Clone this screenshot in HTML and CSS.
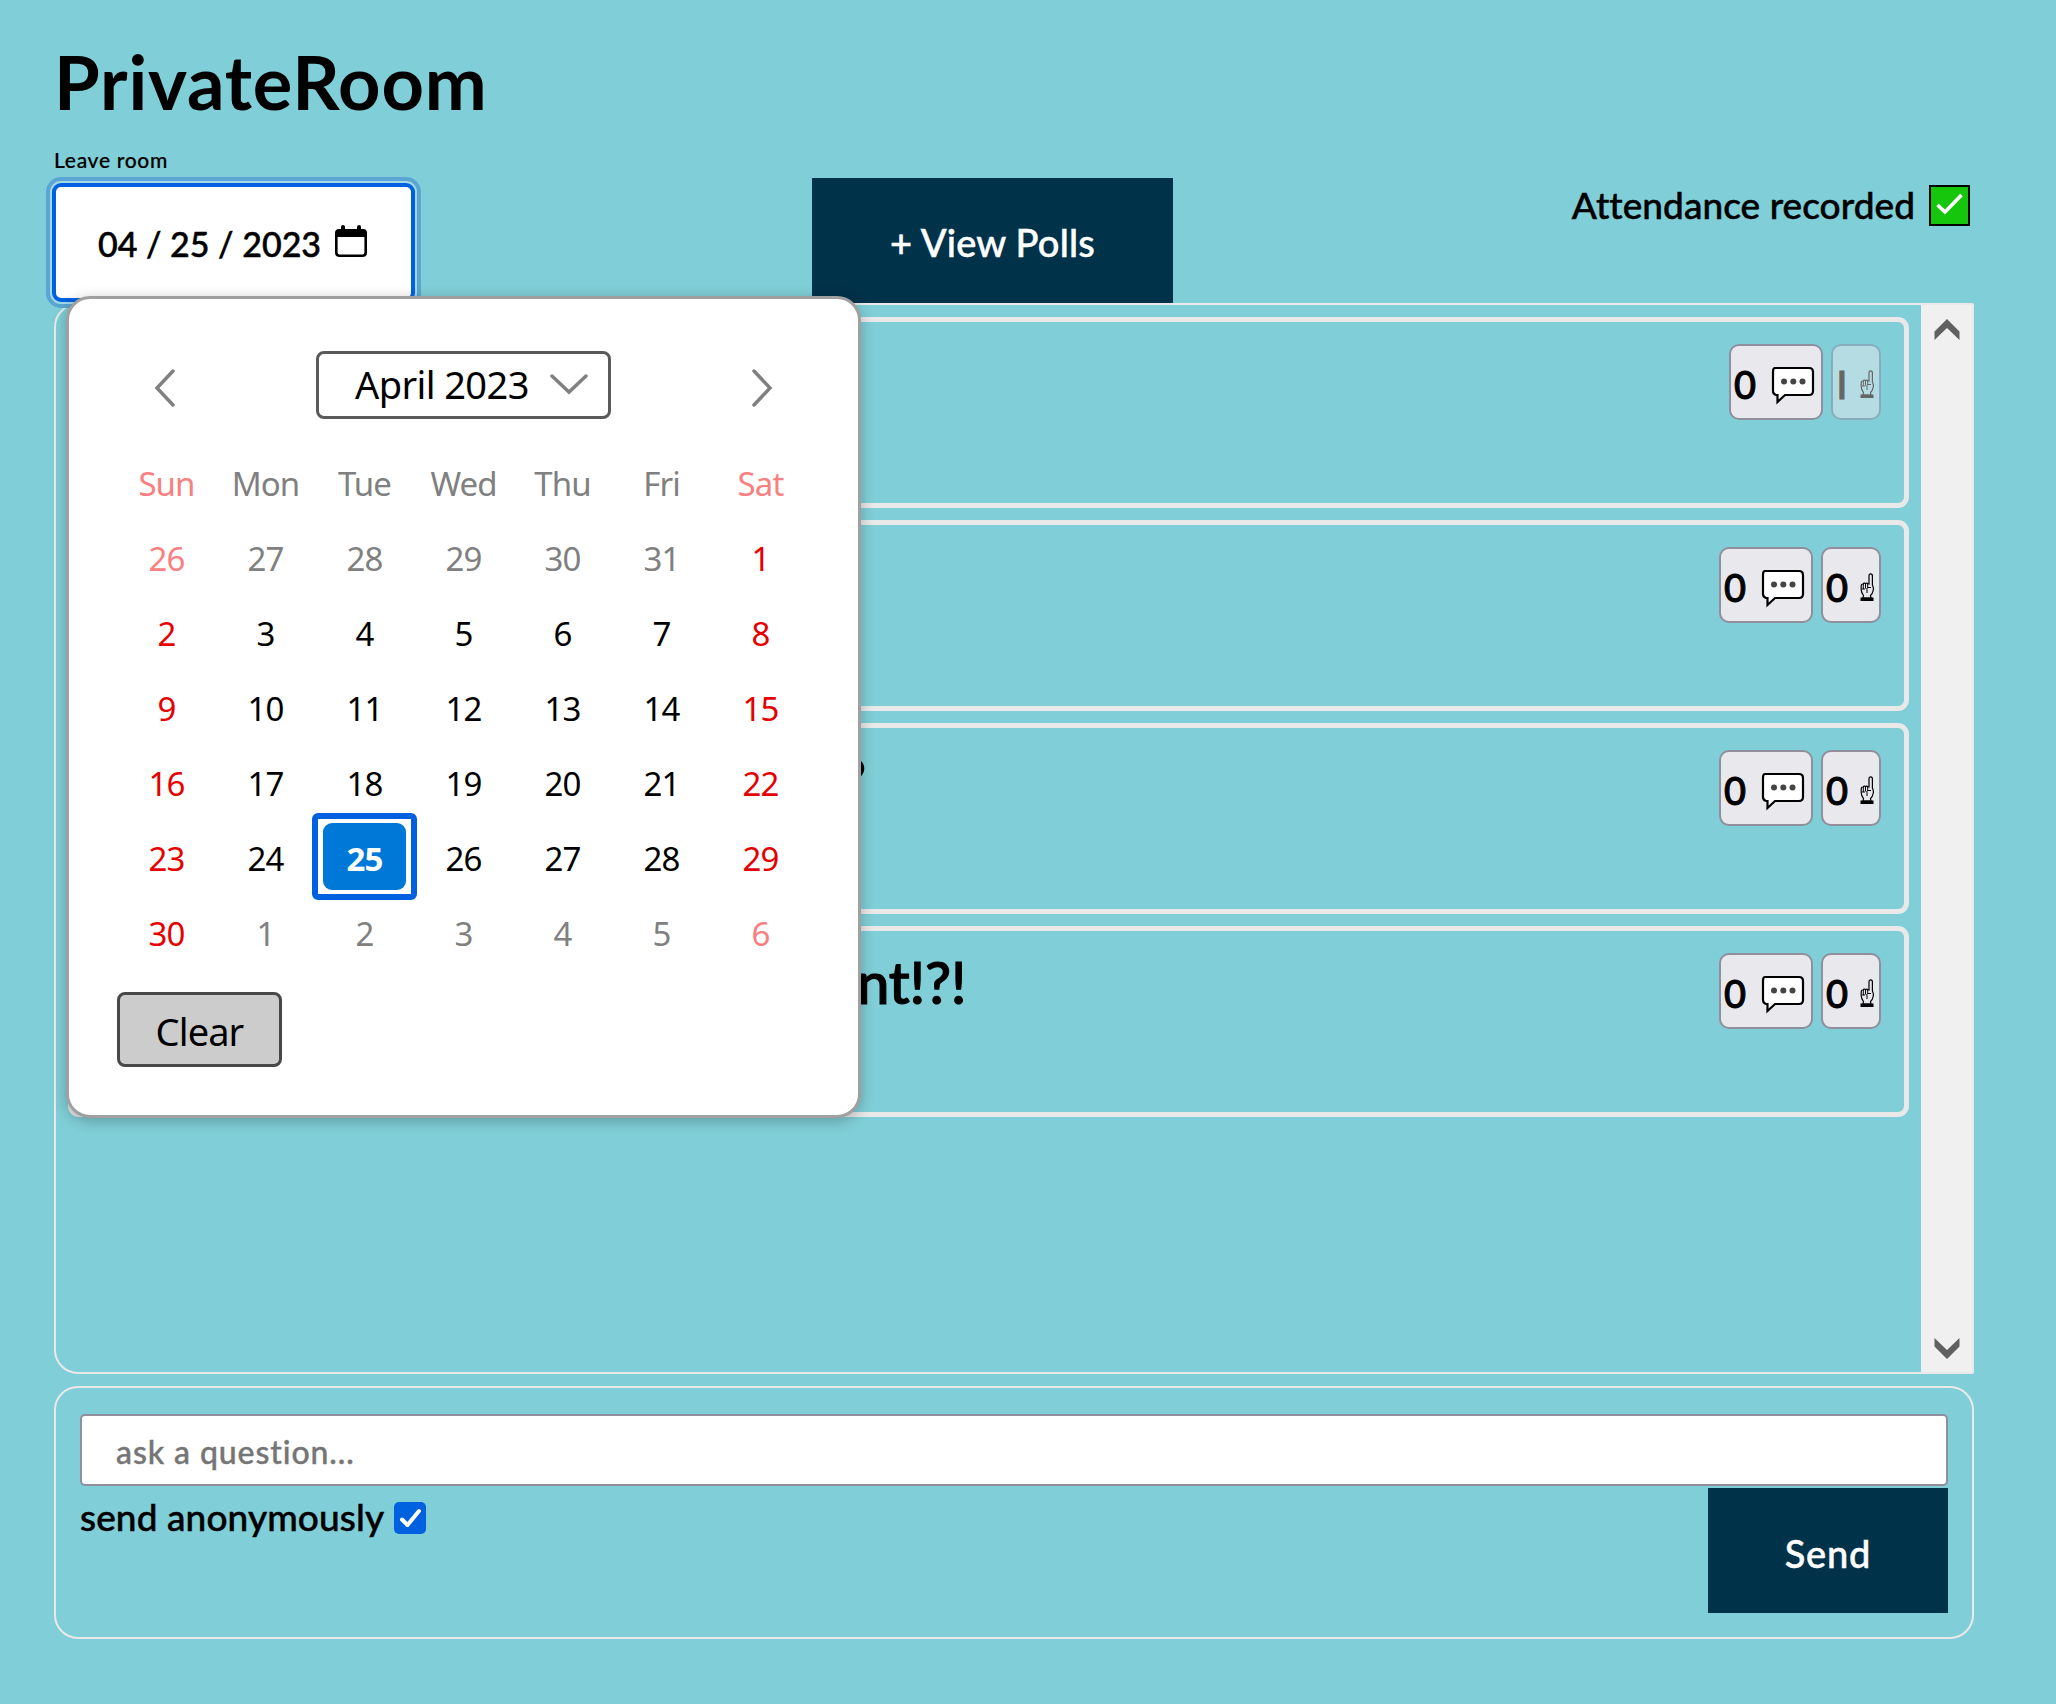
FILE: index.html
```html
<!DOCTYPE html>
<html lang="en">
<head>
<meta charset="utf-8">
<title>PrivateRoom</title>
<link rel="stylesheet" href="styles.css">
</head>
<body>
<svg class="defs" width="0" height="0">
  <symbol id="bubble" viewBox="0 0 44 40">
    <path d="M4 2H38Q42 2 42 6V25Q42 29 38 29H14L6.500 36V29H5Q2 28 2 25V6Q2 2 4 2Z" fill="#fff" stroke="#000" stroke-width="2.200"/>
    <g fill="#444"><circle cx="13" cy="15.500" r="3"/><circle cx="22.300" cy="15.500" r="3"/><circle cx="31.500" cy="15.500" r="3"/></g>
  </symbol>
  <symbol id="finger" viewBox="0 0 14 28">
    <path d="M9 11V3Q9 .8 10.800 .8Q12.400 .8 12.400 3V12Q14 15 13 18Q12.500 21 10.500 22.500L11 25H3L3.500 22.500Q1 19 1.200 16V12.500Q1.500 10.800 3 11Q4.500 9.500 5.500 10.700Q7 9.600 8 10.800Z" fill="none" stroke="currentColor" stroke-width="1.200"/>
    <path d="M3.300 11V16M5.500 10.800V15.500M7.700 11V15M2 16H5M7 20V17Q6 15 8 14.500H11" fill="none" stroke="currentColor"/>
    <path d="M.5 24.500H13.500V28H.5Z" fill="currentColor"/>
  </symbol>
</svg>
<main class="page">
  <h1 class="title"><span>PrivateRoom</span></h1>
  <a class="leave"><span>Leave room</span></a>
  <div class="toolbar">
    <div class="date">
      <span class="date-text">04 / 25 / 2023</span>
      <svg class="cal-icon" viewBox="0 0 32 32"><path d="M1.300 10V27.500Q1.300 30.700 4.500 30.700H27.500Q30.700 30.700 30.700 27.500V10" fill="none" stroke="#000" stroke-width="2.600"/><path d="M0 12V8Q0 4 4 4H6V2Q6 0 8 0Q10 0 10 2V4H22V2Q22 0 24 0Q26 0 26 2V4H28Q32 4 32 8V12Z"/></svg>
    </div>
    <button class="polls"><span>+ View Polls</span></button>
    <div class="attendance"><span class="att-text">Attendance recorded</span><span class="att-check"><svg viewBox="0 0 36 36"><path d="M6 18L13.500 25L30 8" fill="none" stroke="#fff" stroke-width="3.600"/></svg></span></div>
  </div>
  <section class="list">
    <div class="cards">
      <article class="card"><p class="question"></p>
        <button class="pill replies"><span>0</span><svg class="bubble"><use href="#bubble"/></svg></button><button class="pill votes voted"><span class="one">I</span><svg class="finger"><use href="#finger"/></svg></button></article>
      <article class="card"><p class="question"></p>
        <button class="pill replies"><span>0</span><svg class="bubble"><use href="#bubble"/></svg></button><button class="pill votes"><span>0</span><svg class="finger"><use href="#finger"/></svg></button></article>
      <article class="card"><p class="question q-mid">?</p>
        <button class="pill replies"><span>0</span><svg class="bubble"><use href="#bubble"/></svg></button><button class="pill votes"><span>0</span><svg class="finger"><use href="#finger"/></svg></button></article>
      <article class="card"><p class="question q-last">nt!?!</p>
        <button class="pill replies"><span>0</span><svg class="bubble"><use href="#bubble"/></svg></button><button class="pill votes"><span>0</span><svg class="finger"><use href="#finger"/></svg></button></article>
    </div>
    <div class="scrollbar">
      <svg viewBox="0 0 26 22"><path d="M13 0L25.500 12.500V21L13 9L.5 21V12.500Z"/></svg>
      <svg viewBox="0 0 26 22"><path d="M13 21L25.500 8.500V0L13 12L.5 0V8.500Z"/></svg>
    </div>
  </section>
  <section class="ask">
    <div class="field"><span>ask a question...</span></div>
    <div class="ask-row">
      <label class="anon"><span class="anon-text">send anonymously</span><span class="anon-check"><svg viewBox="0 0 32 32"><path d="M8 17.500L13.500 23L25 9" fill="none" stroke="#fff" stroke-width="4" stroke-linecap="round" stroke-linejoin="round"/></svg></span></label>
      <button class="send"><span>Send</span></button>
    </div>
  </section>
  <div class="picker">
    <div class="picker-head">
      <svg class="chev" viewBox="0 0 22 38"><path d="M19 2L3 19L19 36"/></svg>
      <div class="month"><span>April 2023</span><svg class="down" viewBox="0 0 38 22"><path d="M2 3L19 19L36 3"/></svg></div>
      <svg class="chev" viewBox="0 0 22 38"><path d="M3 2L19 19L3 36"/></svg>
    </div>
    <div class="grid">
      <b class="rl">Sun</b><b class="g">Mon</b><b class="g">Tue</b><b class="g">Wed</b><b class="g">Thu</b><b class="g">Fri</b><b class="rl">Sat</b>
      <i class="rl">26</i><i class="g">27</i><i class="g">28</i><i class="g">29</i><i class="g">30</i><i class="g">31</i><i class="r">1</i>
      <i class="r">2</i><i>3</i><i>4</i><i>5</i><i>6</i><i>7</i><i class="r">8</i>
      <i class="r">9</i><i>10</i><i>11</i><i>12</i><i>13</i><i>14</i><i class="r">15</i>
      <i class="r">16</i><i>17</i><i>18</i><i>19</i><i>20</i><i>21</i><i class="r">22</i>
      <i class="r">23</i><i>24</i><i class="sel"><span>25</span></i><i>26</i><i>27</i><i>28</i><i class="r">29</i>
      <i class="r">30</i><i class="g">1</i><i class="g">2</i><i class="g">3</i><i class="g">4</i><i class="g">5</i><i class="rl">6</i>
    </div>
    <button class="clear">Clear</button>
  </div>
</main>
</body>
</html>
```
FILE: styles.css
```css
* { box-sizing: border-box; }
body { margin: 0; background: #80ced7; color: #000; font-family: Lato, "Open Sans", sans-serif; font-weight: 500; }
button { font: inherit; color: inherit; margin: 0; padding: 0; border: 0; }
.defs { position: absolute; }
.page { position: relative; width: 2056px; height: 1704px; padding: 44px 82px 0 54px; overflow: hidden; }
.title { margin: 0; height: 100px; line-height: 75px; font-size: 74px; font-weight: 700; letter-spacing: 0.8px; white-space: nowrap; }
.leave { display: block; height: 34px; line-height: 32px; font-size: 21px; letter-spacing: 0.7px; -webkit-text-stroke: 0.2px; }
.toolbar { display: flex; height: 125px; align-items: flex-start; }
.date { display: flex; align-items: center; width: 363px; height: 119px; margin: 5px 397px 0 -2px; padding: 2px 0 0 42px; background: #fff; border: 4px solid #0061e0; border-radius: 9px; box-shadow: 0 0 0 2px #a0d9ea, 0 0 0 6px #5aa5d2; }
.date-text { width: 237px; font-size: 34px; letter-spacing: 0; -webkit-text-stroke: 0.5px; white-space: nowrap; }
.cal-icon { width: 32px; height: 32px; margin-top: -6px; }
.polls { width: 361px; height: 125px; background: #003249; color: #fff; font-size: 38px; letter-spacing: 0.2px; -webkit-text-stroke: 0.5px; padding-top: 2px; }
.attendance { display: flex; margin: 7px 4px 0 auto; height: 41px; align-items: center; font-size: 37px; letter-spacing: 0.05px; }
.att-text { white-space: nowrap; margin-top: -3px; -webkit-text-stroke: 0.5px; }
.att-check { width: 41px; height: 41px; margin-left: 14px; border: 2px solid #000; background: #16c60c; }
.att-check svg { display: block; width: 37px; height: 36px; }
.list { display: flex; width: 1920px; height: 1071px; border: 2px solid #e9e9ea; border-radius: 24px 2px 2px 24px; }
.cards { display: flex; flex-direction: column; gap: 12px; flex: 1; padding: 12px; }
.card { display: flex; height: 191px; padding: 22px 23px 0 0; border: 5px solid #e9e9ea; border-radius: 11px; }
.question { flex: 1; margin: 0; font-size: 58px; line-height: 58px; letter-spacing: -0.3px; -webkit-text-stroke: 1.2px; }
.q-mid { padding-left: 767px; }
.q-last { padding-left: 784px; }
.pill { display: flex; align-items: center; height: 76px; border: 2px solid #8f8f9d; border-radius: 10px; background: #e9e9ed; font-size: 38px; padding: 3px 0 0 2px; }
.pill span { width: 24px; text-align: center; -webkit-text-stroke: 1px; }
.replies { width: 94px; margin-right: 8px; }
.votes { width: 60px; }
.voted { width: 50px; background: #b5dce3; border-color: #88aebd; color: #666; }
.pill .one { width: 14px; }
.bubble { width: 44px; height: 40px; margin: 5px 0 0 14px; }
.finger { width: 14px; height: 28px; margin-left: 11px; }
.scrollbar { display: flex; flex-direction: column; justify-content: space-between; align-items: center; width: 51px; padding: 14px 0 12px; background: #f0f0f0; }
.scrollbar svg { width: 26px; height: 22px; fill: #606060; }
.ask { width: 1920px; height: 253px; margin-top: 12px; padding: 26px 24px 0; border: 2px solid #e9e9ea; border-radius: 24px; }
.field { height: 72px; padding: 2px 0 0 34px; line-height: 68px; border: 2px solid #8f8f9d; border-radius: 5px; background: #fff; color: #757575; font-size: 32px; letter-spacing: 0.9px; -webkit-text-stroke: 0.4px; }
.ask-row { display: flex; justify-content: space-between; align-items: flex-start; padding-top: 2px; }
.anon { display: flex; align-items: center; height: 60px; font-size: 37px; letter-spacing: 0.1px; }
.anon-text { width: 314px; margin-top: -3px; white-space: nowrap; -webkit-text-stroke: 0.5px; }
.anon-check { width: 32px; height: 32px; border-radius: 5px; background: #0061e0; }
.anon-check svg { display: block; width: 32px; height: 32px; }
.send { width: 240px; height: 125px; background: #003249; color: #fff; font-size: 38px; letter-spacing: 0.8px; -webkit-text-stroke: 0.5px; padding-top: 4px; }
.picker { position: absolute; left: 66px; top: 296px; width: 795px; height: 822px; border: 3px solid #a0a0a0; border-radius: 24px; background: #fff; box-shadow: 0 3px 14px rgba(0,0,0,.25); font-family: "Noto Sans", "Open Sans", sans-serif; font-weight: 400; }
.picker-head { display: flex; align-items: center; justify-content: space-between; margin: 52px 85px 0; height: 68px; }
.chev, .down { fill: none; stroke: #808080; stroke-width: 3.500; stroke-linecap: round; }
.chev { width: 22px; height: 38px; margin-top: 6px; }
.month { display: flex; align-items: center; width: 295px; height: 68px; padding-left: 36px; border: 3px solid #5a5a5a; border-radius: 8px; font-size: 38px; letter-spacing: -0.6px; white-space: nowrap; }
.month span { width: 195px; margin-top: -2px; }
.down { width: 38px; height: 22px; margin-top: -2px; }
.grid { display: grid; grid-template-columns: repeat(7, 99px); grid-auto-rows: 75px; margin: 27px 0 0 48px; }
.grid b, .grid i { display: flex; align-items: center; justify-content: center; font-style: normal; font-weight: 400; font-size: 33px; letter-spacing: -0.9px; }
.grid .g { color: #808080; }
.grid .r { color: #e60000; }
.grid .rl { color: #f98080; }
.grid .sel { position: relative; z-index: 1; margin: -8px -3px -4px; border: 6px solid #0061e0; border-radius: 6px; }
.sel span { display: flex; align-items: center; justify-content: center; width: 83px; height: 67px; padding-top: 4px; border-radius: 9px; background: #0078d7; color: #fff; font-weight: 700; }
.clear { display: block; width: 165px; height: 75px; margin: 21px 0 0 48px; border: 3px solid #484848; border-radius: 8px; background: #ccc; font-size: 38px; letter-spacing: -0.9px; padding-top: 2px; }
```
